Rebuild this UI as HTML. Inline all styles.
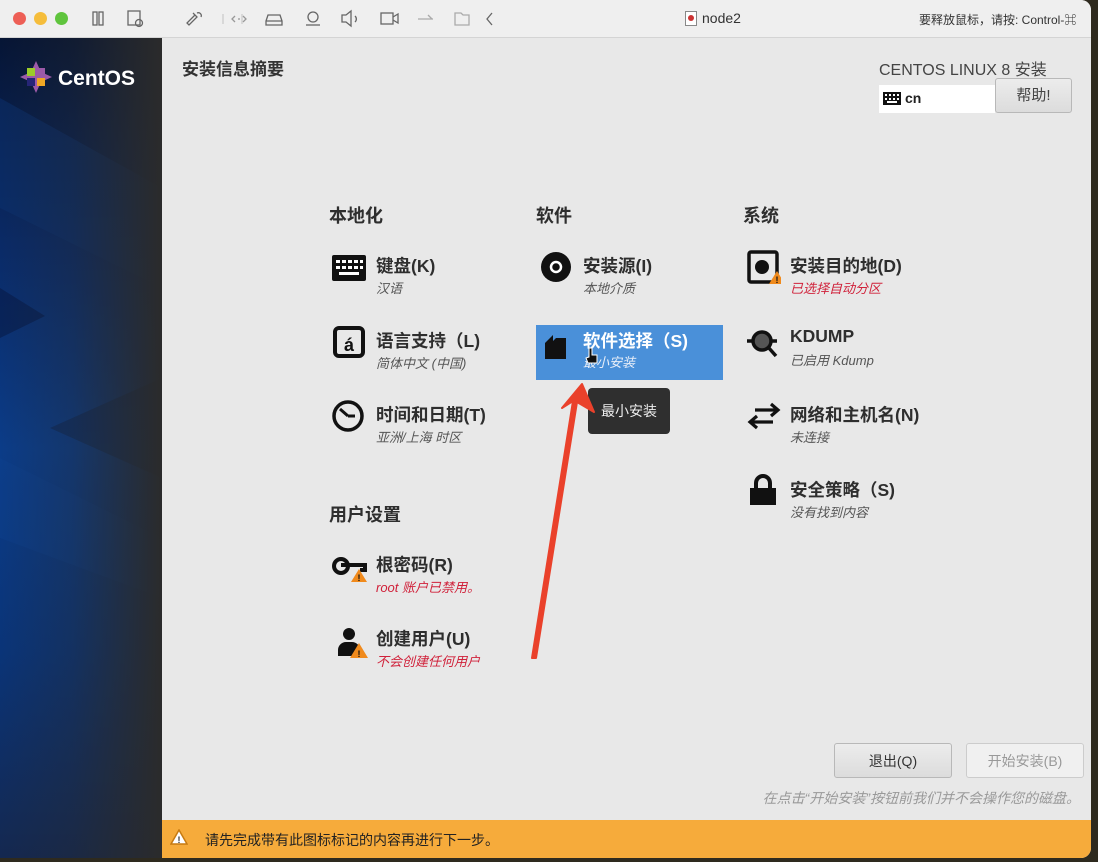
<!DOCTYPE html>
<html><head><meta charset="utf-8"><style>
*{margin:0;padding:0;box-sizing:border-box}
body{width:1098px;height:862px;overflow:hidden;background:#2e2a1e;font-family:"Liberation Sans","Noto Sans CJK SC",sans-serif;position:relative}
.win{position:absolute;left:0;top:0;width:1091px;height:858px;border-radius:0 10px 10px 0;overflow:hidden;background:#e8e8e8}
.tb{position:absolute;left:0;top:0;width:100%;height:38px;background:#efefef;border-bottom:1px solid #d4d4d4}
.dot{position:absolute;top:12px;width:13px;height:13px;border-radius:50%}
.ab{position:absolute;white-space:nowrap}
.side{position:absolute;left:0;top:38px;width:162px;height:820px}
.h{font-weight:bold;font-size:18px;color:#2e2e2e}
.t{font-size:17.5px;font-weight:bold;color:#2e2e2e}
.s{font-size:13px;font-style:italic;color:#555}
.r{color:#d0213a}
.btn{position:absolute;border:1px solid #b8b8b8;border-radius:3px;background:linear-gradient(#ececec,#dcdcdc);font-size:14px;text-align:center;line-height:34px;color:#333}
</style></head><body>
<div class="win">
<div class="tb">
<div class="dot" style="left:13px;background:#ed5f56"></div>
<div class="dot" style="left:34px;background:#f5bd3b"></div>
<div class="dot" style="left:55px;background:#5fc43d"></div>
<svg class="ab" style="left:85px;top:8px" width="420" height="22" fill="none" stroke="#666" stroke-width="1.3">
<rect x="8" y="4" width="4" height="13"/><rect x="14" y="4" width="4" height="13"/>
<rect x="43" y="3" width="12" height="14"/><circle cx="54" cy="15" r="3.5"/>
<path d="M108 5l4 4-8 8-2-2 8-8M112 5a3 3 0 0 1 4 4"/>
<path d="M138 6v10M157 6v10" stroke="#ccc"/>
<path d="M150 8l-3 3 3 3M158 8l3 3-3 3M153 11h2" stroke="#999"/>
<path d="M183 7h12l2 6v4h-16v-4z M181 13h16"/>
<circle cx="228" cy="9" r="5"/><path d="M221 17h14"/>
<path d="M257 7h4l5-4v15l-5-4h-4z M270 8a4 4 0 0 1 0 6"/>
<rect x="296" y="5" width="12" height="11"/><path d="M308 9l5-3v9l-5-3"/>
<path d="M333 11h15M343 7l4 4" stroke="#aaa"/>
<path d="M370 5h6l2 2h6v10h-14z" stroke="#aaa"/>
<path d="M407 5l-5 6 5 6"/>
</svg>
<svg class="ab" style="left:685px;top:11px" width="12" height="15"><rect x=".5" y=".5" width="11" height="14" fill="#fff" stroke="#888"/><circle cx="6" cy="7" r="3" fill="#c33"/></svg>
<div class="ab" style="left:702px;top:10px;font-size:14px;color:#333">node2</div>
<div class="ab" style="left:919px;top:11px;font-size:12px;color:#333">要释放鼠标，请按: Control-⌘</div>
</div>
<svg class="side" width="162" height="820" viewBox="0 0 162 820">
<defs><linearGradient id="g" x1="0" x2="0" y1="0" y2="1"><stop offset="0" stop-color="#061535"/><stop offset=".25" stop-color="#0a2a66"/><stop offset=".5" stop-color="#0b3c88"/><stop offset=".75" stop-color="#0a3478"/><stop offset="1" stop-color="#142850"/></linearGradient>
<linearGradient id="g2" x1="0" x2="1"><stop offset="0" stop-color="#2a2a2a" stop-opacity="0"/><stop offset=".45" stop-color="#2a2a2a" stop-opacity=".3"/><stop offset="1" stop-color="#2b2b2b" stop-opacity="1"/></linearGradient></defs>
<rect width="162" height="820" fill="url(#g)"/>
<polygon points="0,60 162,150 162,250 0,170" fill="#0b3170" opacity=".5"/>
<polygon points="0,250 45,278 0,300" fill="#061a48" opacity=".6"/>
<polygon points="50,390 162,340 162,440" fill="#0e1a35" opacity=".35"/>
<polygon points="0,420 162,500 162,560 0,500" fill="#0d4190" opacity=".35"/>
<rect width="162" height="820" fill="url(#g2)"/>
<g transform="translate(36,39)">
<polygon points="0,-16 5,-5 16,0 5,5 0,16 -5,5 -16,0 -5,-5" fill="#9c5aa8"/>
<rect x="-9" y="-9" width="8" height="8" fill="#9ccd2a"/><rect x="1" y="-9" width="8" height="8" fill="#9c5aa8"/>
<rect x="-9" y="1" width="8" height="8" fill="#262577"/><rect x="1" y="1" width="8" height="8" fill="#efa724"/>
</g>
<text x="58" y="47" font-size="21" font-weight="bold" fill="#fff" font-family="Liberation Sans">CentOS</text>
</svg>
<div class="ab" style="left:182px;top:55px;font-size:17px;font-weight:bold;color:#333">安装信息摘要</div>
<div class="ab" style="left:879px;top:56px;font-size:16px;color:#444">CENTOS LINUX 8 安装</div>
<div class="ab" style="left:879px;top:85px;width:116px;height:28px;background:#fff"></div>
<svg class="ab" style="left:883px;top:92px" width="18" height="13"><rect width="18" height="13" fill="#111"/><g fill="#fff"><rect x="2" y="2" width="2" height="2"/><rect x="6" y="2" width="2" height="2"/><rect x="10" y="2" width="2" height="2"/><rect x="14" y="2" width="2" height="2"/><rect x="2" y="6" width="2" height="2"/><rect x="6" y="6" width="2" height="2"/><rect x="10" y="6" width="2" height="2"/><rect x="14" y="6" width="2" height="2"/><rect x="4" y="9" width="10" height="2"/></g></svg>
<div class="ab" style="left:905px;top:90px;font-size:14px;font-weight:bold;color:#222">cn</div>
<div class="btn" style="left:995px;top:78px;width:77px;height:35px;font-size:15px;color:#444">帮助!</div>

<div class="ab h" style="left:329px;top:202px">本地化</div>
<div class="ab h" style="left:536px;top:202px">软件</div>
<div class="ab h" style="left:743px;top:202px">系统</div>
<div class="ab h" style="left:329px;top:501px">用户设置</div>

<div class="ab" style="left:536px;top:325px;width:187px;height:55px;background:#4a90d9"></div>

<svg class="ab" style="left:331px;top:254px" width="36" height="28"><rect x="1" y="1" width="34" height="26" rx="2" fill="#111"/><g fill="#fff"><rect x="5" y="6" width="4" height="3"/><rect x="11" y="6" width="4" height="3"/><rect x="17" y="6" width="4" height="3"/><rect x="23" y="6" width="4" height="3"/><rect x="29" y="6" width="3" height="3"/><rect x="5" y="12" width="4" height="3"/><rect x="11" y="12" width="4" height="3"/><rect x="17" y="12" width="4" height="3"/><rect x="23" y="12" width="4" height="3"/><rect x="29" y="12" width="3" height="3"/><rect x="8" y="18" width="20" height="3"/></g></svg>
<svg class="ab" style="left:333px;top:326px" width="32" height="32"><rect x="2" y="2" width="28" height="28" rx="4" fill="none" stroke="#111" stroke-width="4"/><text x="16" y="25" text-anchor="middle" font-size="18" font-weight="bold" fill="#111">á</text></svg>
<svg class="ab" style="left:331px;top:399px" width="34" height="34"><circle cx="17" cy="17" r="14" fill="none" stroke="#111" stroke-width="3.5"/><path d="M17 17L9 10M17 17h7" stroke="#111" stroke-width="3"/></svg>
<svg class="ab" style="left:540px;top:251px" width="32" height="32"><circle cx="16" cy="16" r="15" fill="#111"/><circle cx="16" cy="16" r="5" fill="none" stroke="#fff" stroke-width="2.5"/></svg>
<svg class="ab" style="left:543px;top:333px" width="26" height="28"><path d="M2 10l8-8v6l3-3h10v21H2z" fill="#111"/></svg>
<svg class="ab" style="left:747px;top:250px" width="34" height="36"><rect x="2" y="2" width="28" height="30" rx="2" fill="none" stroke="#111" stroke-width="3.5"/><circle cx="15" cy="17" r="7" fill="#111"/><path d="M22 34l8-13 8 13z" fill="#f08a1c"/><text x="30" y="33" text-anchor="middle" font-size="9" font-weight="bold" fill="#111">!</text></svg>
<svg class="ab" style="left:747px;top:326px" width="34" height="32"><circle cx="15" cy="15" r="9" fill="#555" stroke="#111" stroke-width="3.5"/><path d="M21 21l8 9M0 15h5M25 15h5" stroke="#111" stroke-width="3.5"/></svg>
<svg class="ab" style="left:747px;top:400px" width="34" height="32"><path d="M8 10h22M24 4l7 6-7 6M26 22H4M10 16l-7 6 7 6" stroke="#111" stroke-width="3.2" fill="none"/></svg>
<svg class="ab" style="left:749px;top:474px" width="28" height="32"><path d="M7 14v-5a7 7 0 0 1 14 0v5" fill="none" stroke="#111" stroke-width="4"/><rect x="1" y="14" width="26" height="17" fill="#111"/></svg>
<svg class="ab" style="left:331px;top:552px" width="38" height="32"><circle cx="10" cy="14" r="7" fill="none" stroke="#111" stroke-width="4"/><path d="M10 13h24v5h-5" fill="none" stroke="#111" stroke-width="4"/><path d="M20 30l8-13 8 13z" fill="#f08a1c"/><text x="28" y="29" text-anchor="middle" font-size="9" font-weight="bold" fill="#111">!</text></svg>
<svg class="ab" style="left:336px;top:626px" width="36" height="34"><circle cx="13" cy="8" r="6" fill="#111"/><path d="M2 30v-6a8 8 0 0 1 8-8h6a8 8 0 0 1 8 8v6z" fill="#111"/><path d="M14 32l9-15 9 15z" fill="#f08a1c"/><text x="23" y="31" text-anchor="middle" font-size="9" font-weight="bold" fill="#111">!</text></svg>

<div class="ab t" style="left:376px;top:253px">键盘(K)</div><div class="ab s" style="left:376px;top:278px">汉语</div>
<div class="ab t" style="left:376px;top:328px">语言支持（L)</div><div class="ab s" style="left:376px;top:353px">简体中文 (中国)</div>
<div class="ab t" style="left:376px;top:402px">时间和日期(T)</div><div class="ab s" style="left:376px;top:427px">亚洲/上海 时区</div>
<div class="ab t" style="left:376px;top:552px">根密码(R)</div><div class="ab s r" style="left:376px;top:577px">root 账户已禁用。</div>
<div class="ab t" style="left:376px;top:626px">创建用户(U)</div><div class="ab s r" style="left:376px;top:651px">不会创建任何用户</div>

<div class="ab t" style="left:583px;top:253px">安装源(I)</div><div class="ab s" style="left:583px;top:278px">本地介质</div>
<div class="ab t" style="left:583px;top:328px;color:#fff">软件选择（S)</div><div class="ab s" style="left:583px;top:352px;color:#e8eef8">最小安装</div>
<svg class="ab" style="left:585px;top:347px" width="14" height="18"><path d="M4 1h3v7h5v8H3l-2-5 3-1z" fill="#111" stroke="#fff" stroke-width="1"/></svg>

<div class="ab t" style="left:790px;top:253px">安装目的地(D)</div><div class="ab s r" style="left:790px;top:278px">已选择自动分区</div>
<div class="ab t" style="left:790px;top:326px">KDUMP</div><div class="ab s" style="left:790px;top:350px">已启用 Kdump</div>
<div class="ab t" style="left:790px;top:402px">网络和主机名(N)</div><div class="ab s" style="left:790px;top:427px">未连接</div>
<div class="ab t" style="left:790px;top:477px">安全策略（S)</div><div class="ab s" style="left:790px;top:502px">没有找到内容</div>

<div class="ab" style="left:588px;top:388px;width:82px;height:46px;background:#2f2f2f;border-radius:4px;color:#eee;font-size:14px;line-height:46px;text-align:center">最小安装</div>

<svg class="ab" style="left:0;top:0" width="1091" height="858"><path d="M532 658L536 658L577 402L594 412L582 384L562 408L573 401Z" fill="#ea412b" stroke="#ea412b" stroke-width="2" stroke-linejoin="round"/></svg>

<div class="btn" style="left:834px;top:743px;width:118px;height:35px">退出(Q)</div>
<div class="btn" style="left:966px;top:743px;width:118px;height:35px;background:#f0f0f0;color:#999;border-color:#ccc">开始安装(B)</div>
<div class="ab" style="right:11px;top:788px;font-size:14px;font-style:italic;color:#999">在点击“开始安装”按钮前我们并不会操作您的磁盘。</div>

<div class="ab" style="left:162px;top:820px;width:929px;height:38px;background:#f6ab3b"></div>
<svg class="ab" style="left:170px;top:829px" width="18" height="16"><path d="M9 1l8 14H1z" fill="#fff" stroke="#c77a10" stroke-width="1.5"/><text x="9" y="14" text-anchor="middle" font-size="9" font-weight="bold" fill="#333">!</text></svg>
<div class="ab" style="left:205px;top:830px;font-size:14px;color:#222">请先完成带有此图标标记的内容再进行下一步。</div>
</div>
</body></html>
